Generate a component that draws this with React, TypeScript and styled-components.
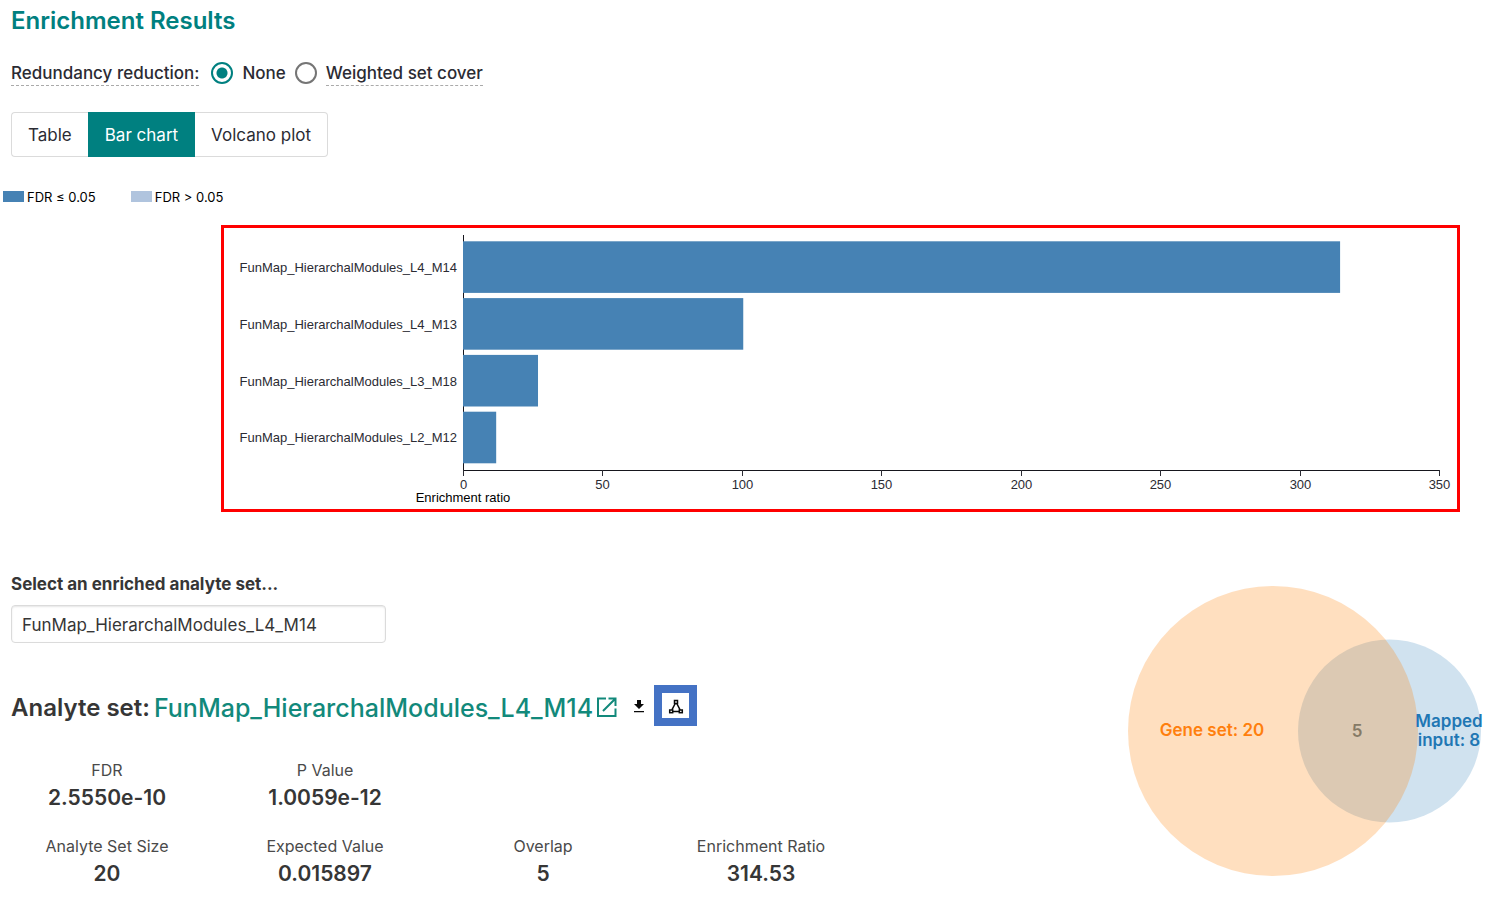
import React, { useState } from "react";
import styled, { createGlobalStyle } from "styled-components";

const Global = createGlobalStyle`
  * { box-sizing: border-box; }
  body {
    margin: 0;
    background: #fff;
    color: #363636;
    font-family: Inter, "Liberation Sans", sans-serif;
    font-size: 17px;
    line-height: 24px;
  }
`;

const Page = styled.main`
  display: flex;
  flex-direction: column;
`;

const Controls = styled.section`
  display: flex;
  flex-direction: column;
  align-items: flex-start;
  padding: 5px 11px 0;
`;

const Title = styled.h1`
  margin: 0;
  color: #008080;
  font-size: 24px;
  font-weight: 600;
  line-height: 32px;
`;

const Reduction = styled.div`
  display: flex;
  align-items: center;
  gap: 9px;
  height: 28px;
  margin-top: 22px;
  color: #2b2b33;
  font-weight: 500;
`;

const Hint = styled.span`
  border-bottom: 1px dashed #aaa;
`;

const Options = styled.div`
  display: flex;
  gap: 9px;
  padding-left: 3px;
`;

const Option = styled.label`
  display: flex;
  align-items: center;
  gap: 9px;
`;

const Radio = styled.input`
  appearance: none;
  width: 22px;
  height: 22px;
  margin: 0;
  border: 2px solid #757575;
  border-radius: 50%;
  &:checked {
    border-color: #008080;
    background: radial-gradient(circle, #008080 5px, #fff 6px);
  }
`;

const Tabs = styled.div`
  display: flex;
  height: 45px;
  margin-top: 25px;
`;

const Tab = styled.button<{ $active: boolean }>`
  padding: 0 16px;
  border: 1px solid ${(p) => (p.$active ? "#008080" : "#dbdbdb")};
  background: ${(p) => (p.$active ? "#008080" : "#fff")};
  color: ${(p) => (p.$active ? "#fff" : "#2b2b33")};
  font: inherit;
  cursor: pointer;
  &:first-child { border-right: 0; border-radius: 4px 0 0 4px; }
  &:last-child { border-left: 0; border-radius: 0 4px 4px 0; }
`;

const Legend = styled.div`
  display: flex;
  gap: 35px;
  margin-top: 32px;
  padding-left: 3px;
  color: #000;
  font-size: 13px;
  line-height: 16px;
`;

const LegendItem = styled.span`
  display: flex;
  align-items: center;
  gap: 3px;
`;

const Swatch = styled.i<{ $color: string }>`
  width: 21px;
  height: 11px;
  margin-bottom: 1px;
  background: ${(p) => p.$color};
`;

const ChartFrame = styled.figure`
  margin: 20px 40px 0 221px;
  border: 3px solid #f00;
`;

const ChartSvg = styled.svg`
  display: block;
  width: 100%;
  height: auto;
  fill: #2b2b33;
  font-family: "Liberation Sans", Arial, sans-serif;
  font-size: 13px;
`;

const Details = styled.section`
  display: flex;
  justify-content: space-between;
  align-items: flex-start;
  margin-top: 60px;
`;

const Summary = styled.div`
  display: flex;
  flex-direction: column;
  align-items: flex-start;
`;

const SelectLabel = styled.label`
  margin-left: 11px;
  font-weight: 700;
`;

const SetSelect = styled.select`
  appearance: none;
  width: 375px;
  height: 38px;
  margin: 9px 0 0 11px;
  padding: 1px 10px 0;
  border: 1px solid #dbdbdb;
  border-radius: 4px;
  background: #fff;
  box-shadow: inset 0 1px 2px rgba(10, 10, 10, 0.1);
  color: #363636;
  font: inherit;
`;

const SetHeading = styled.div`
  display: flex;
  align-items: center;
  height: 41px;
  margin: 42px 0 0 11px;
`;

const SetTitle = styled.h2`
  display: flex;
  align-items: center;
  gap: 4px;
  margin: 0;
  padding-top: 5px;
  font-size: 24px;
  font-weight: 600;
  line-height: 32px;
`;

const SetLink = styled.a`
  display: flex;
  align-items: center;
  gap: 3px;
  color: #12897b;
  font-size: 25px;
  font-weight: 500;
  text-decoration: none;
`;

const IconButton = styled.button`
  display: flex;
  margin-left: 15px;
  padding: 0;
  border: 0;
  background: none;
  cursor: pointer;
`;

const NetworkButton = styled(IconButton)`
  align-items: center;
  justify-content: center;
  width: 43px;
  height: 41px;
  margin-left: 9px;
  border: 8px solid #4472c4;
`;

const Stats = styled.dl`
  display: grid;
  grid-template-columns: repeat(4, 218px);
  row-gap: 21px;
  margin: 32px 0 0 -2px;
  text-align: center;
`;

const Stat = styled.div<{ $column: number }>`
  grid-column: ${(p) => p.$column};
`;

const StatName = styled.dt`
  color: #4a4a4a;
  font-size: 16px;
  line-height: 24px;
`;

const StatValue = styled.dd`
  margin: 0;
  font-size: 21px;
  font-weight: 600;
  line-height: 31px;
`;

const VennSvg = styled.svg`
  flex: none;
  margin: 14px 10px 0 0;
  font-size: 17px;
  font-weight: 600;
  text-anchor: middle;
`;

const ORIGIN = 239;
const UNIT = 976 / 350;
const bars = [
  { name: "FunMap_HierarchalModules_L4_M14", ratio: 314.53 },
  { name: "FunMap_HierarchalModules_L4_M13", ratio: 100.5 },
  { name: "FunMap_HierarchalModules_L3_M18", ratio: 26.9 },
  { name: "FunMap_HierarchalModules_L2_M12", ratio: 11.9 },
];
const ticks = [0, 50, 100, 150, 200, 250, 300, 350];
const tabs = ["Table", "Bar chart", "Volcano plot"];
const stats = [
  { name: "FDR", value: "2.5550e-10", column: 1 },
  { name: "P Value", value: "1.0059e-12", column: 2 },
  { name: "Analyte Set Size", value: "20", column: 1 },
  { name: "Expected Value", value: "0.015897", column: 2 },
  { name: "Overlap", value: "5", column: 3 },
  { name: "Enrichment Ratio", value: "314.53", column: 4 },
];

function BarChart() {
  return (
    <ChartSvg viewBox="0 0 1233 281" role="img" aria-label="Enrichment ratio by analyte set">
      <path d="M239.5 7V248M239 242.5H1215.5" stroke="#16161d" fill="none" />
      {ticks.map((t) => {
        const x = Math.round(ORIGIN + t * UNIT) + 0.5;
        return (
          <g key={t}>
            <path d={`M${x} 242V248`} stroke="#2b2b33" />
            <text x={x} y="261" textAnchor="middle">{t}</text>
          </g>
        );
      })}
      {bars.map((b, i) => (
        <g key={b.name}>
          <rect x={ORIGIN} y={13.3 + i * 56.8} width={b.ratio * UNIT} height="51.6" fill="#4682b4" />
          <text x="233" y={44 + i * 56.8} textAnchor="end">{b.name}</text>
        </g>
      ))}
      <text x="239" y="274" textAnchor="middle" fill="#000">Enrichment ratio</text>
    </ChartSvg>
  );
}

function Venn() {
  return (
    <VennSvg width="362" height="290" viewBox="0 0 362 290" role="img" aria-label="Overlap of gene set and mapped input">
      <circle cx="261.5" cy="145" r="91.5" fill="#1f77b4" fillOpacity="0.21" />
      <circle cx="145" cy="145" r="145" fill="#ff8000" fillOpacity="0.25" />
      <text x="84" y="150" fill="#ff7f0e">Gene set: 20</text>
      <text x="229" y="151" fill="#857a66">5</text>
      <text x="321" y="141" fill="#1f77b4">Mapped</text>
      <text x="321" y="160" fill="#1f77b4">input: 8</text>
    </VennSvg>
  );
}

export default function App() {
  const [tab, setTab] = useState("Bar chart");
  return (
    <Page>
      <Global />
      <Controls>
        <Title>Enrichment Results</Title>
        <Reduction role="radiogroup" aria-labelledby="reduction">
          <Hint id="reduction">Redundancy reduction:</Hint>
          <Options>
            <Option>
              <Radio type="radio" name="reduction" defaultChecked />
              None
            </Option>
            <Option>
              <Radio type="radio" name="reduction" />
              <Hint>Weighted set cover</Hint>
            </Option>
          </Options>
        </Reduction>
        <Tabs>
          {tabs.map((t) => (
            <Tab key={t} type="button" $active={t === tab} onClick={() => setTab(t)}>{t}</Tab>
          ))}
        </Tabs>
      </Controls>
      <Legend>
        <LegendItem><Swatch $color="#4682b4" />FDR ≤ 0.05</LegendItem>
        <LegendItem><Swatch $color="#b0c4de" />FDR &gt; 0.05</LegendItem>
      </Legend>
      <ChartFrame><BarChart /></ChartFrame>
      <Details>
        <Summary>
          <SelectLabel htmlFor="analyte-set">Select an enriched analyte set...</SelectLabel>
          <SetSelect id="analyte-set" defaultValue={bars[0].name}>
            {bars.map((b) => <option key={b.name}>{b.name}</option>)}
          </SetSelect>
          <SetHeading>
            <SetTitle>
              Analyte set:
              <SetLink href="#analyte-set">
                FunMap_HierarchalModules_L4_M14
                <svg width="22" height="22" viewBox="0 0 22 22" fill="none" stroke="#12897b" strokeWidth="2" aria-hidden="true">
                  <path d="M10 1.5H2V19H19.5V11.5M12.5 1.5H19.5V9M19.5 1.5L7 14" />
                </svg>
              </SetLink>
            </SetTitle>
            <IconButton type="button" aria-label="Download">
              <svg width="12" height="14" viewBox="0 0 12 14" fill="#0a0a0a">
                <path d="M4 1H8V5H11L6 10L1 5H4ZM1 12H11V13.2H1Z" />
              </svg>
            </IconButton>
            <NetworkButton type="button" aria-label="Show network">
              <svg width="16" height="16" viewBox="0 0 16 16" fill="none" stroke="#0a0a0a" strokeWidth="1.5">
                <path d="M7.2 5.5L3.9 11.8M8.8 5.5L12.1 11.8M4.5 13.5H11.5" />
                <rect x="6.5" y="2.5" width="3" height="3" />
                <rect x="1.7" y="12" width="3" height="2.7" />
                <rect x="11.3" y="12" width="3" height="2.7" />
              </svg>
            </NetworkButton>
          </SetHeading>
          <Stats>
            {stats.map((s) => (
              <Stat key={s.name} $column={s.column}>
                <StatName>{s.name}</StatName>
                <StatValue>{s.value}</StatValue>
              </Stat>
            ))}
          </Stats>
        </Summary>
        <Venn />
      </Details>
    </Page>
  );
}
